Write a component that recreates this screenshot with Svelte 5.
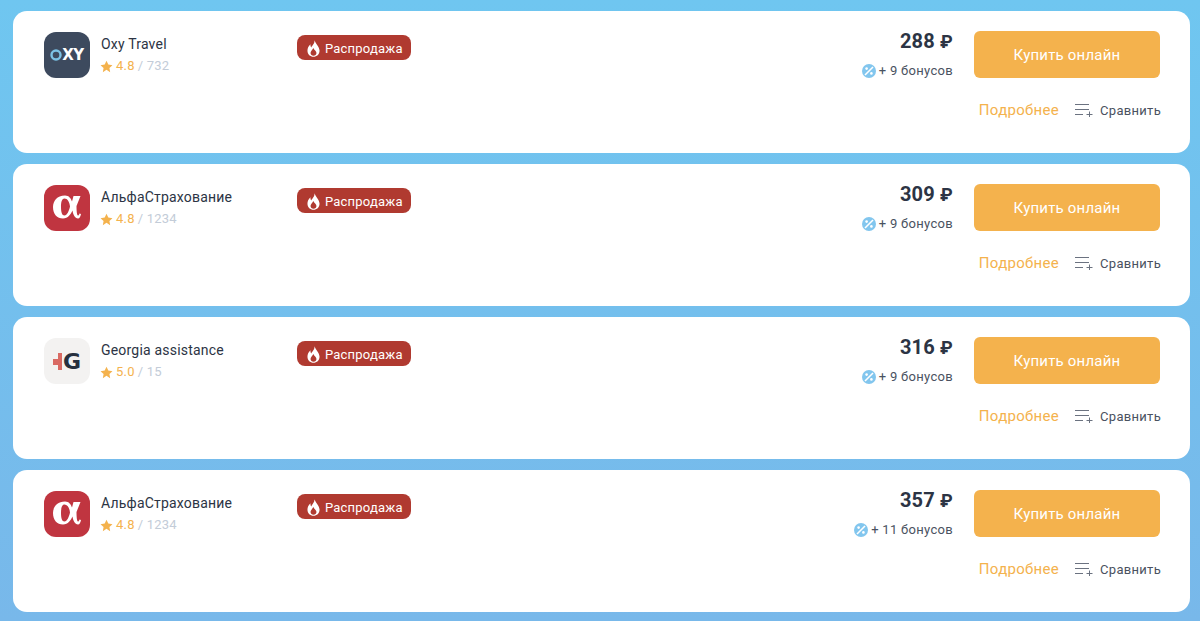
<script>
  const offers = [
    { name: 'Oxy Travel', logo: 'oxy', rating: '4.8', reviews: 732, price: 288, bonus: 9 },
    { name: 'АльфаСтрахование', logo: 'alfa', rating: '4.8', reviews: 1234, price: 309, bonus: 9 },
    { name: 'Georgia assistance', logo: 'georgia', rating: '5.0', reviews: 15, price: 316, bonus: 9 },
    { name: 'АльфаСтрахование', logo: 'alfa', rating: '4.8', reviews: 1234, price: 357, bonus: 11 }
  ];
</script>

<div class="list">
  {#each offers as offer}
    <article class="card">
      <div class="logo logo-{offer.logo}">
        {#if offer.logo === 'oxy'}
          <svg viewBox="0 0 12 12" width="12" height="12">
            <circle cx="6" cy="6" r="4.500" fill="none" stroke="#7cc2e4" stroke-width="2.400" />
          </svg><span>XY</span>
        {:else if offer.logo === 'alfa'}
          <svg viewBox="0 0 46 46" width="46" height="46">
            <path fill="#fff" fill-rule="evenodd" d="M21 10.500C13 10.500 9 16 9 22C9 29 13 33.500 19 33.500C24 33.500 27 29 28.500 25.500C29 29.500 31 33.500 34 33.500C35.500 33.500 36.500 31.500 37 29L35.500 28.500C35 30 34.500 30.500 34 30.500C33 30.500 32.500 26 32.500 21L36.500 11L29.500 11L28 16.500C27 13.500 25 10.500 21 10.500ZM20.500 13.500C17.500 13.500 17 18 17 22C17 27 18 30.500 20.500 30.500C23 30.500 25 26 26 21.500C25.500 17 23.500 13.500 20.500 13.500Z" />
          </svg>
        {:else}
          <i class="cross"></i><span>G</span>
        {/if}
      </div>

      <div class="company">
        <div class="name">{offer.name}</div>
        <div class="rating">
          <svg viewBox="0 0 24 24" width="13" height="13"><path fill="#f4b24d" d="M12 1.500l3.300 7 7.700 1-5.600 5.300 1.400 7.700L12 18l-6.800 4.500 1.400-7.700L1 9.500l7.700-1z" /></svg>
          <span class="score">{offer.rating}</span>
          <span class="reviews">/ {offer.reviews}</span>
        </div>
      </div>

      <div class="badge">
        <svg viewBox="0 0 14 18" width="13" height="17"><path fill="#fff" fill-rule="evenodd" d="M8 0C8.500 3.500 5.500 5.500 4.500 8C4 7 3.500 6 3.800 4.500C1.500 6.500 .5 9 .5 11.500C.5 15.500 3.500 18 7 18C10.500 18 13.500 15.500 13.500 11.500C13.500 7 9.500 4 8 0ZM7 16.800C5.200 16.800 3.800 15.500 3.800 13.800C3.800 11.800 6 10.500 6.800 8.500C7.800 10.800 10.200 11.800 10.200 13.800C10.200 15.500 8.800 16.800 7 16.800Z" /></svg>
        <span>Распродажа</span>
      </div>

      <div class="offer">
        <div class="pricing">
          <div class="price">{offer.price} <span class="rub">₽</span></div>
          <div class="bonus">
            <svg viewBox="0 0 14 14" width="14" height="14">
              <circle cx="7" cy="7" r="7" fill="#82c6ee" />
              <path d="M3 11L11 3" stroke="#fff" stroke-width="1.600" />
              <circle cx="4.600" cy="4.600" r="1.300" fill="#fff" />
              <circle cx="9.400" cy="9.400" r="1.300" fill="#fff" />
            </svg>
            <span>+ {offer.bonus} бонусов</span>
          </div>
        </div>
        <button class="buy">Купить онлайн</button>
        <div class="links">
          <span class="more">Подробнее</span>
          <span class="compare">
            <svg viewBox="0 0 18 14" width="18" height="14" fill="none" stroke="#6b7280" stroke-width="1">
              <path d="M0 1.500h14M0 6.500h14M0 11.500h8M11.500 11.500h6M14.500 8.500v6" />
            </svg>
            Сравнить
          </span>
        </div>
      </div>
    </article>
  {/each}
</div>

<style>
  :global(body) {
    margin: 0;
    background: #74bdec;
  }

  .list {
    height: 621px;
    box-sizing: border-box;
    padding: 11px 10px 0 13px;
    display: flex;
    flex-direction: column;
    gap: 11px;
    background: linear-gradient(180deg, #6fc6f0 0%, #78b8ea 100%);
    font-family: Roboto, sans-serif;
    overflow: hidden;
  }

  .card {
    height: 142px;
    flex: none;
    box-sizing: border-box;
    padding: 20px 30px 0 31px;
    display: flex;
    align-items: flex-start;
    background: #fff;
    border-radius: 14px;
  }

  .logo {
    width: 46px;
    height: 46px;
    flex: none;
    border-radius: 12px;
    display: flex;
    align-items: center;
    justify-content: center;
    margin-top: 1px;
  }
  .logo-oxy {
    background: #3d4a5e;
    color: #fff;
    font-family: "DejaVu Sans", sans-serif;
    font-size: 15px;
    font-weight: 700;
    letter-spacing: -0.5px;
  }
  .logo-alfa {
    background: #c03540;
  }
  .logo-georgia {
    background: #f3f2f1;
    color: #26303f;
    font-family: "DejaVu Sans", sans-serif;
    font-size: 22px;
    font-weight: 700;
  }
  .cross {
    width: 9px;
    height: 17px;
    margin-right: 1px;
    background:
      linear-gradient(#d96a63, #d96a63) 0 6px / 9px 6px no-repeat,
      linear-gradient(#d96a63, #d96a63) 5px 0 / 4px 17px no-repeat;
  }

  .company {
    width: 196px;
    flex: none;
    padding: 4px 0 0 11px;
  }
  .name {
    font-size: 14px;
    line-height: 18px;
    letter-spacing: 0.2px;
    color: #2c3444;
  }
  .rating {
    margin: 4px 0 0 -1px;
    display: flex;
    align-items: center;
    gap: 3px;
    font-size: 13px;
    letter-spacing: 0.2px;
    line-height: 18px;
  }
  .score {
    color: #f4b24d;
  }
  .reviews {
    color: #c3ccd8;
  }

  .badge {
    margin-top: 4px;
    width: 114px;
    height: 25px;
    box-sizing: border-box;
    padding: 1px 0 0 10px;
    flex: none;
    display: flex;
    align-items: center;
    gap: 5px;
    background: #b03a30;
    border-radius: 8px;
    color: #fff;
    font-size: 13px;
    letter-spacing: 0.2px;
  }

  .offer {
    margin-left: auto;
    display: grid;
    grid-template-columns: auto 186px;
    column-gap: 21px;
    justify-items: end;
  }
  .pricing {
    text-align: right;
  }
  .price {
    font-size: 20px;
    font-weight: 700;
    letter-spacing: 0.2px;
    line-height: 20px;
    color: #2c3444;
  }
  .rub {
    font-size: 18px;
  }
  .bonus {
    margin-top: 10px;
    display: flex;
    align-items: center;
    gap: 3px;
    font-size: 13px;
    letter-spacing: 0.3px;
    line-height: 18px;
    color: #4a5261;
  }
  .buy {
    width: 186px;
    height: 47px;
    border: 0;
    border-radius: 6px;
    background: #f4b24d;
    color: #fff;
    font: 400 15px Roboto, sans-serif;
    letter-spacing: 0.2px;
  }
  .links {
    grid-column: 1 / 3;
    margin-top: 20px;
    display: flex;
    align-items: center;
    gap: 16px;
    margin-right: -1px;
  }
  .more {
    color: #f4b24d;
    font-size: 15px;
    letter-spacing: 0.3px;
    line-height: 20px;
  }
  .compare {
    display: flex;
    align-items: center;
    gap: 7px;
    color: #4a5261;
    font-size: 13px;
    letter-spacing: 0.3px;
  }
</style>
